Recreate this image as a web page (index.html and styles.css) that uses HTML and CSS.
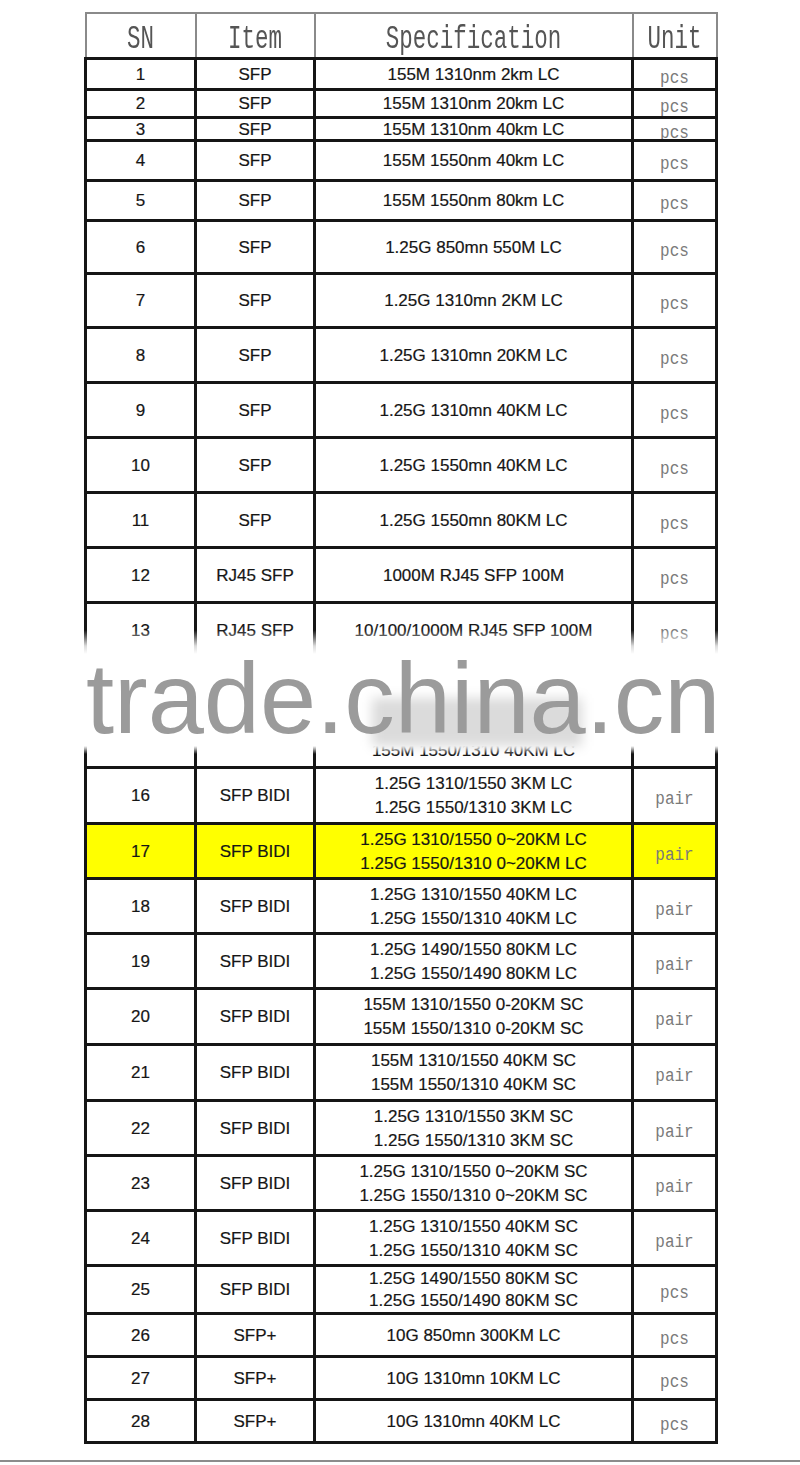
FILE: index.html
```html
<!DOCTYPE html>
<html>
<head>
<meta charset="utf-8">
<title>SFP list</title>
<link rel="stylesheet" href="styles.css">
</head>
<body>
<div class="page">
  <div class="sheet">
    <table class="grid">
      <colgroup>
        <col class="c-sn">
        <col class="c-item">
        <col class="c-spec">
        <col class="c-unit">
      </colgroup>
      <thead>
        <tr class="h45">
          <th><span class="hd">SN</span></th>
          <th><span class="hd">Item</span></th>
          <th><span class="hd">Specification</span></th>
          <th><span class="hd">Unit</span></th>
        </tr>
      </thead>
      <tbody>
        <tr class="h31"><td>1</td><td>SFP</td><td>155M 1310nm 2km LC</td><td class="unit"><span>pcs</span></td></tr>
        <tr class="h28"><td>2</td><td>SFP</td><td>155M 1310nm 20km LC</td><td class="unit"><span>pcs</span></td></tr>
        <tr class="h23"><td>3</td><td>SFP</td><td>155M 1310nm 40km LC</td><td class="unit"><span>pcs</span></td></tr>
        <tr class="h40"><td>4</td><td>SFP</td><td>155M 1550nm 40km LC</td><td class="unit"><span>pcs</span></td></tr>
        <tr class="h40"><td>5</td><td>SFP</td><td>155M 1550nm 80km LC</td><td class="unit"><span>pcs</span></td></tr>
        <tr class="h53"><td>6</td><td>SFP</td><td>1.25G 850mn 550M LC</td><td class="unit"><span>pcs</span></td></tr>
        <tr class="h54"><td>7</td><td>SFP</td><td>1.25G 1310mn 2KM LC</td><td class="unit"><span>pcs</span></td></tr>
        <tr class="h55"><td>8</td><td>SFP</td><td>1.25G 1310mn 20KM LC</td><td class="unit"><span>pcs</span></td></tr>
        <tr class="h55"><td>9</td><td>SFP</td><td>1.25G 1310mn 40KM LC</td><td class="unit"><span>pcs</span></td></tr>
        <tr class="h55"><td>10</td><td>SFP</td><td>1.25G 1550mn 40KM LC</td><td class="unit"><span>pcs</span></td></tr>
        <tr class="h55"><td>11</td><td>SFP</td><td>1.25G 1550mn 80KM LC</td><td class="unit"><span>pcs</span></td></tr>
        <tr class="h55"><td>12</td><td>RJ45 SFP</td><td>1000M RJ45 SFP 100M</td><td class="unit"><span>pcs</span></td></tr>
        <tr class="h55"><td>13</td><td>RJ45 SFP</td><td>10/100/1000M RJ45 SFP 100M</td><td class="unit"><span>pcs</span></td></tr>
        <tr class="h55 dbl"><td></td><td></td><td></td><td class="unit"></td></tr>
        <tr class="h55 dbl"><td></td><td></td><td class="low">155M 1550/1310 40KM LC</td><td class="unit"></td></tr>
        <tr class="h56 dbl"><td>16</td><td>SFP BIDI</td><td>1.25G 1310/1550 3KM LC<br>1.25G 1550/1310 3KM LC</td><td class="unit"><span>pair</span></td></tr>
        <tr class="h55 dbl hl"><td>17</td><td>SFP BIDI</td><td>1.25G 1310/1550 0~20KM LC<br>1.25G 1550/1310 0~20KM LC</td><td class="unit"><span>pair</span></td></tr>
        <tr class="h55 dbl"><td>18</td><td>SFP BIDI</td><td>1.25G 1310/1550 40KM LC<br>1.25G 1550/1310 40KM LC</td><td class="unit"><span>pair</span></td></tr>
        <tr class="h55 dbl"><td>19</td><td>SFP BIDI</td><td>1.25G 1490/1550 80KM LC<br>1.25G 1550/1490 80KM LC</td><td class="unit"><span>pair</span></td></tr>
        <tr class="h56 dbl"><td>20</td><td>SFP BIDI</td><td>155M 1310/1550 0-20KM SC<br>155M 1550/1310 0-20KM SC</td><td class="unit"><span>pair</span></td></tr>
        <tr class="h56 dbl"><td>21</td><td>SFP BIDI</td><td>155M 1310/1550 40KM SC<br>155M 1550/1310 40KM SC</td><td class="unit"><span>pair</span></td></tr>
        <tr class="h55 dbl"><td>22</td><td>SFP BIDI</td><td>1.25G 1310/1550 3KM SC<br>1.25G 1550/1310 3KM SC</td><td class="unit"><span>pair</span></td></tr>
        <tr class="h55 dbl"><td>23</td><td>SFP BIDI</td><td>1.25G 1310/1550 0~20KM SC<br>1.25G 1550/1310 0~20KM SC</td><td class="unit"><span>pair</span></td></tr>
        <tr class="h55 dbl"><td>24</td><td>SFP BIDI</td><td>1.25G 1310/1550 40KM SC<br>1.25G 1550/1310 40KM SC</td><td class="unit"><span>pair</span></td></tr>
        <tr class="h48 dbl tight"><td>25</td><td>SFP BIDI</td><td>1.25G 1490/1550 80KM SC<br>1.25G 1550/1490 80KM SC</td><td class="unit"><span>pcs</span></td></tr>
        <tr class="h43"><td>26</td><td>SFP+</td><td>10G 850mn 300KM LC</td><td class="unit"><span>pcs</span></td></tr>
        <tr class="h43"><td>27</td><td>SFP+</td><td>10G 1310mn 10KM LC</td><td class="unit"><span>pcs</span></td></tr>
        <tr class="h43"><td>28</td><td>SFP+</td><td>10G 1310mn 40KM LC</td><td class="unit"><span>pcs</span></td></tr>
      </tbody>
    </table>
    <div class="watermark">
      <div class="wm-shade"></div>
      <span class="wm-text">trade.china.cn</span>
    </div>
  </div>
</div>
</body>
</html>
```

FILE: styles.css
```css
html, body {
  margin: 0;
  padding: 0;
  background: #ffffff;
}

body {
  font-family: "Liberation Sans", Arial, sans-serif;
  color: #161616;
}

.page {
  height: 1460px;
  border-bottom: 2px solid #8c8c8c;
  box-sizing: content-box;
}

.sheet {
  position: relative;
  padding: 12px 0 0 84px;
}

.grid {
  border-collapse: collapse;
  table-layout: fixed;
  width: 632px;
}

.c-sn { width: 110px; }
.c-item { width: 119px; }
.c-spec { width: 318px; }
.c-unit { width: 84px; }

.grid th {
  border: 2px solid #8a8a8a;
  font-weight: normal;
  padding: 9px 0 0 0;
  text-align: center;
  vertical-align: middle;
  overflow: hidden;
  line-height: 20px;
}

.hd {
  display: inline-block;
  font-family: "Liberation Mono", "Courier New", monospace;
  font-size: 22.5px;
  color: #555555;
  transform: scaleY(1.5);
  line-height: 20px;
}

.grid td {
  border: 3px solid #151515;
  padding: 2px 0 0 0;
  text-align: center;
  vertical-align: middle;
  font-size: 17px;
  line-height: 18px;
  overflow: hidden;
  white-space: nowrap;
  -webkit-text-stroke: 0.2px #161616;
}

.grid tr.dbl td {
  line-height: 24px;
}

.grid tr.tight td {
  line-height: 22px;
  padding-top: 1px;
}

.grid td.low {
  vertical-align: bottom;
  padding-bottom: 3px;
}

.unit span {
  display: inline-block;
  font-family: "Liberation Mono", "Courier New", monospace;
  font-size: 16px;
  line-height: 16px;
  color: #7a7a7a;
  -webkit-text-stroke: 0;
  transform: translateY(2px) scaleY(1.2);
}

.hl td {
  background: #ffff00;
}

.h23 { height: 23px; }
.h28 { height: 28px; }
.h31 { height: 31px; }
.h40 { height: 40px; }
.h43 { height: 43px; }
.h45 { height: 45px; }
.h48 { height: 48px; }
.h53 { height: 53px; }
.h54 { height: 54px; }
.h55 { height: 55px; }
.h56 { height: 56px; }

.watermark {
  position: absolute;
  left: 60px;
  top: 630px;
  width: 680px;
  height: 124px;
  background: linear-gradient(to bottom,
    rgba(255,255,255,0) 0px,
    rgba(255,255,255,0.85) 16px,
    rgba(255,255,255,1) 24px,
    rgba(255,255,255,1) 116px,
    rgba(255,255,255,0) 124px);
}

.wm-shade {
  position: absolute;
  left: 312px;
  top: 68px;
  width: 210px;
  height: 48px;
  background: rgba(0,0,0,0.14);
  filter: blur(6px);
}

.wm-text {
  position: absolute;
  left: 26px;
  top: 12px;
  font-family: "Liberation Sans", Arial, sans-serif;
  font-size: 101px;
  line-height: 112px;
  color: #9b9b9b;
  white-space: nowrap;
}
```
